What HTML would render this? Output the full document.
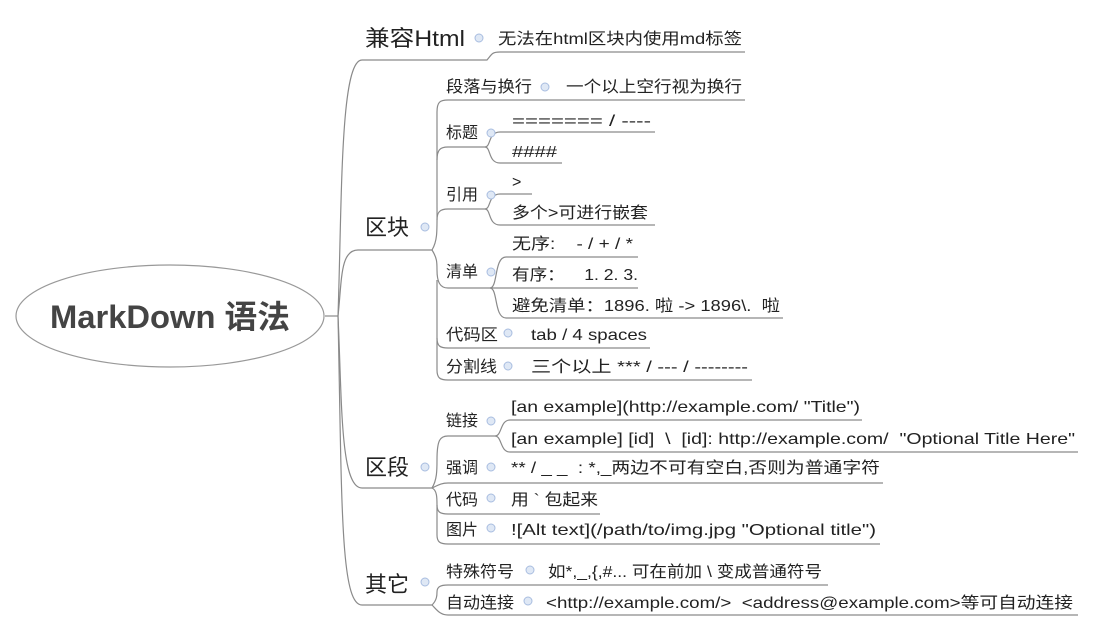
<!DOCTYPE html>
<html><head><meta charset="utf-8"><style>
html,body{margin:0;padding:0;background:#fff;}
svg{display:block;}
text{font-family:"Liberation Sans","Noto Sans CJK SC",sans-serif;fill:#222;}
.l1{font-size:22px;}
.l2{font-size:16px;}
</style></head><body>
<svg width="1095" height="631" viewBox="0 0 1095 631">
<g fill="none" stroke="#8a8a8a" stroke-width="1.2">
<ellipse cx="170" cy="316" rx="154" ry="51" stroke="#999"/>
<path d="M325,316 L338,316"/>
<path d="M338,316 C342,200 340,60 362,60 L487,60 C492,54 492,52 500,52 L745,52"/>
<path d="M338,316 C342,280 340,250 358,250 L432,250"/>
<path d="M338,316 C342,400 340,488 362,488 L432,488"/>
<path d="M338,316 C342,500 340,605 362,605 L432,605"/>
<path d="M432,250 C438,240 437,230 437,200 L437,112 C437,102 440,100 448,100 L745,100"/>
<path d="M437,160 C437,150 440,147 448,147 L485,147"/>
<path d="M437,220 C437,212 440,209 448,209 L485,209"/>
<path d="M432,250 C437,258 437,262 437,270 C437,282 440,288 448,288 L490,288"/>
<path d="M437,280 L437,338 C437,346 440,348 448,348 L650,348"/>
<path d="M437,338 L437,370 C437,378 440,380 448,380 L752,380"/>
<path d="M485,147 C491,147 488,132 500,132 L655,132"/>
<path d="M485,147 C491,147 488,163 500,163 L562,163"/>
<path d="M485,209 C491,209 488,194 500,194 L532,194"/>
<path d="M485,209 C491,209 488,225 500,225 L655,225"/>
<path d="M490,288 C498,288 494,257 506,257 L638,257"/>
<path d="M490,288 L638,288"/>
<path d="M490,288 C498,288 494,318 506,318 L783,318"/>
<path d="M432,488 C437,480 437,470 437,460 C437,440 440,436 448,436 L495,436"/>
<path d="M432,488 C437,486 440,483 448,483 L883,483"/>
<path d="M432,488 C437,490 437,498 437,505 C437,512 440,514 448,514 L600,514"/>
<path d="M437,505 L437,535 C437,542 440,544 448,544 L880,544"/>
<path d="M495,436 C502,436 500,420 510,420 L862,420"/>
<path d="M495,436 C502,436 500,452 510,452 L1078,452"/>
<path d="M432,605 C437,600 437,595 437,592 C437,587 440,585 448,585 L828,585"/>
<path d="M432,605 C437,610 440,615 448,615 L1078,615"/>
</g>
<text x="50" y="328" textLength="240" lengthAdjust="spacingAndGlyphs" style="font-size:32px;font-weight:bold;fill:#444;">MarkDown 语法</text>
<g fill="#dfe8f5" stroke="#a8bde0" stroke-width="1">
<circle cx="479" cy="38" r="4"/><circle cx="425" cy="227" r="4"/><circle cx="425" cy="467" r="4"/><circle cx="425" cy="582" r="4"/>
<circle cx="545" cy="87" r="4"/><circle cx="491" cy="133" r="4"/><circle cx="491" cy="195" r="4"/><circle cx="491" cy="272" r="4"/>
<circle cx="508" cy="333" r="4"/><circle cx="508" cy="366" r="4"/><circle cx="491" cy="421" r="4"/><circle cx="491" cy="467" r="4"/>
<circle cx="491" cy="498" r="4"/><circle cx="491" cy="528" r="4"/><circle cx="530" cy="570" r="4"/><circle cx="528" cy="601" r="4"/>
</g>
<text class="l1" x="365" y="46" textLength="100" lengthAdjust="spacingAndGlyphs">兼容Html</text>
<text class="l2" x="498" y="44" textLength="244" lengthAdjust="spacingAndGlyphs">无法在html区块内使用md标签</text>
<text class="l1" x="365" y="235">区块</text>
<text class="l1" x="365" y="475">区段</text>
<text class="l1" x="365" y="592">其它</text>
<text class="l2" x="446" y="92" textLength="86" lengthAdjust="spacingAndGlyphs">段落与换行</text>
<text class="l2" x="566" y="92" textLength="176" lengthAdjust="spacingAndGlyphs">一个以上空行视为换行</text>
<text class="l2" x="446" y="138">标题</text>
<text class="l2" x="512" y="126" textLength="139" lengthAdjust="spacingAndGlyphs">======= / ----</text>
<text class="l2" x="512" y="157" textLength="45" lengthAdjust="spacingAndGlyphs">####</text>
<text class="l2" x="446" y="200">引用</text>
<text class="l2" x="512" y="187">&gt;</text>
<text class="l2" x="512" y="218" textLength="136" lengthAdjust="spacingAndGlyphs">多个&gt;可进行嵌套</text>
<text class="l2" x="446" y="277">清单</text>
<text class="l2" x="512" y="249" textLength="121" lengthAdjust="spacingAndGlyphs">无序:&#160;&#160;&#160; - / + / *</text>
<text class="l2" x="512" y="280" textLength="126" lengthAdjust="spacingAndGlyphs">有序：&#160;&#160;&#160; 1. 2. 3.</text>
<text class="l2" x="512" y="311" textLength="268" lengthAdjust="spacingAndGlyphs">避免清单：1896. 啦 -&gt; 1896\.&#160; 啦</text>
<text class="l2" x="446" y="340" textLength="52" lengthAdjust="spacingAndGlyphs">代码区</text>
<text class="l2" x="531" y="340" textLength="116" lengthAdjust="spacingAndGlyphs">tab / 4 spaces</text>
<text class="l2" x="446" y="372" textLength="51" lengthAdjust="spacingAndGlyphs">分割线</text>
<text class="l2" x="531" y="372" textLength="217" lengthAdjust="spacingAndGlyphs">三个以上 *** / --- / --------</text>
<text class="l2" x="446" y="426">链接</text>
<text class="l2" x="511" y="412" textLength="349" lengthAdjust="spacingAndGlyphs">[an example](http://example.com/ "Title")</text>
<text class="l2" x="511" y="444" textLength="564" lengthAdjust="spacingAndGlyphs">[an example] [id]&#160; \&#160; [id]: http://example.com/&#160; "Optional Title Here"</text>
<text class="l2" x="446" y="473">强调</text>
<text class="l2" x="511" y="473" textLength="369" lengthAdjust="spacingAndGlyphs">** / _ _&#160; : *,_两边不可有空白,否则为普通字符</text>
<text class="l2" x="446" y="505">代码</text>
<text class="l2" x="511" y="505" textLength="87" lengthAdjust="spacingAndGlyphs">用 ` 包起来</text>
<text class="l2" x="446" y="535">图片</text>
<text class="l2" x="511" y="535" textLength="365" lengthAdjust="spacingAndGlyphs">![Alt text](/path/to/img.jpg "Optional title")</text>
<text class="l2" x="446" y="577" textLength="68" lengthAdjust="spacingAndGlyphs">特殊符号</text>
<text class="l2" x="548" y="577" textLength="274" lengthAdjust="spacingAndGlyphs">如*,_,{,#... 可在前加 \ 变成普通符号</text>
<text class="l2" x="446" y="608" textLength="68" lengthAdjust="spacingAndGlyphs">自动连接</text>
<text class="l2" x="546" y="608" textLength="527" lengthAdjust="spacingAndGlyphs">&lt;http://example.com/&gt;&#160; &lt;address@example.com&gt;等可自动连接</text>
</svg>
</body></html>
